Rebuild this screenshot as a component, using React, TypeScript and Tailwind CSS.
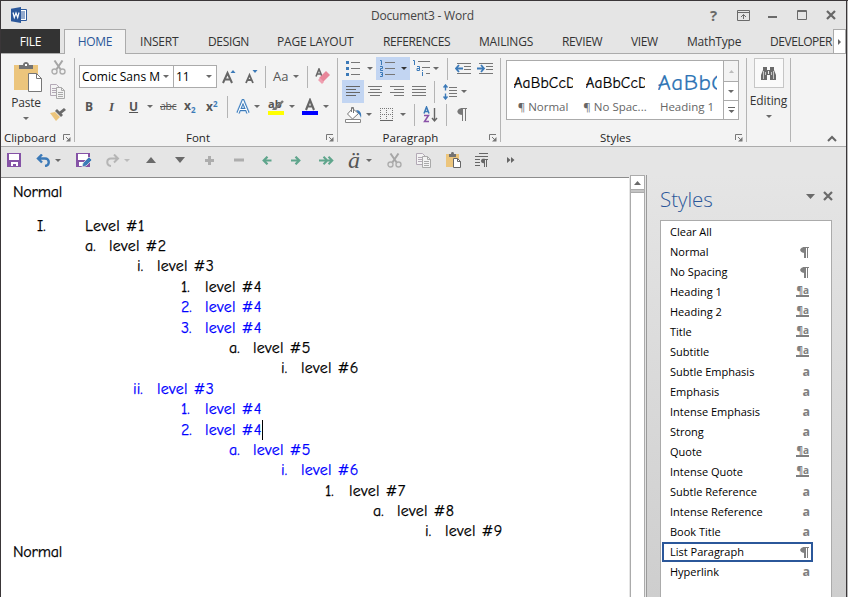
import type { ReactNode } from "react";

type IconProps = {
  w: number;
  h: number;
  className?: string;
  children: ReactNode;
};

function Icon({ w, h, className = "", children }: IconProps) {
  return (
    <svg
      width={w}
      height={h}
      viewBox={`0 0 ${w} ${h}`}
      fill="none"
      className={`shrink-0 ${className}`}
      aria-hidden="true"
    >
      {children}
    </svg>
  );
}

function Caret({ className = "", color = "#6a6a6a" }: { className?: string; color?: string }) {
  return (
    <Icon w={6} h={3} className={className}>
      <path d="M0 0h6L3 3z" fill={color} />
    </Icon>
  );
}

function Divider({ className = "" }: { className?: string }) {
  return <div className={`h-[22px] w-px shrink-0 bg-[#b4b4b4] ${className}`} />;
}

function Launcher() {
  return (
    <Icon w={8} h={8} className="absolute right-[4px] bottom-[4px]">
      <path d="M.5 6V.5H7M3 3l3 3" stroke="#777" />
      <path d="M7.5 3v4.5H3z" fill="#777" />
    </Icon>
  );
}

type GroupProps = {
  label?: string;
  className: string;
  launcher?: boolean;
  labelClass?: string;
  children: ReactNode;
};

function Group({ label, className, launcher, labelClass = "", children }: GroupProps) {
  return (
    <div className={`relative flex h-[92px] shrink-0 flex-col ${className}`}>
      <div className="h-[76px]">{children}</div>
      {label && (
        <div className={`text-center text-[11.5px] leading-[16px] text-[#262626] ${labelClass}`}>{label}</div>
      )}
      {launcher && <Launcher />}
      <div className="absolute top-[4px] right-0 h-[84px] w-px bg-[#b4b4b4]" />
    </div>
  );
}

function Scissors({ className = "" }: { className?: string }) {
  return (
    <Icon w={15} h={15} className={className}>
      <path d="M3.5 0.5L10 10M11.500 0.500L5 10" stroke="#a6a6a6" strokeWidth="2" />
      <circle cx="3.500" cy="11.500" r="2.500" stroke="#adadad" strokeWidth="1.400" />
      <circle cx="11.500" cy="11.500" r="2.500" stroke="#adadad" strokeWidth="1.400" />
    </Icon>
  );
}

function CopyIcon({ className = "" }: { className?: string }) {
  return (
    <Icon w={16} h={15} className={className}>
      <path d="M.5.5h6l3 3v8h-9z" fill="#f3f3f3" stroke="#b3a9b6" />
      <path d="M2 4.500h4M2 6.500h4M2 8.500h4" stroke="#b3a9b6" />
      <path d="M6.500 3.500h5l3 3v8h-8z" fill="#f3f3f3" stroke="#aaa" />
      <path d="M11.500 3.500v3h3M8 8.500h5M8 10.500h5M8 12.500h5" stroke="#aaa" />
    </Icon>
  );
}

const tabs = [
  { name: "INSERT", style: "w-[68px] tracking-[-0.2px]" },
  { name: "DESIGN", style: "w-[69px] tracking-[-0.35px]" },
  { name: "PAGE LAYOUT", style: "w-[106px] tracking-[-0.2px]" },
  { name: "REFERENCES", style: "w-[96px] tracking-[-0.35px]" },
  { name: "MAILINGS", style: "w-[83px] tracking-[-0.2px]" },
  { name: "REVIEW", style: "w-[69px] tracking-[-0.35px]" },
  { name: "VIEW", style: "w-[56px] tracking-[-0.35px]" },
  { name: "MathType", style: "w-[83px] tracking-[-0.2px]" },
  { name: "DEVELOPER", style: "w-[63px] tracking-[-0.45px]" },
];

function TitleBar() {
  return (
    <div className="flex h-[28px] items-center">
      <Icon w={17} h={16} className="ml-[10px]">
        <path d="M9 2.500h6.500v11H9z" fill="#fff" stroke="#2b579a" />
        <path d="M10 5h4M10 7h4M10 9h4M10 11h4" stroke="#2b579a" />
        <path d="M0 1.800L10 0v16L0 14.200z" fill="#2b579a" />
        <path d="M2 5.500l1.300 5L5 6l1.700 4.500L8 5.500" stroke="#fff" strokeWidth="1.200" />
      </Icon>
      <div className="ml-[343px] w-[110px] pt-[2px] text-[12px] tracking-[-0.2px] whitespace-nowrap text-[#444]">
        Document3 - Word
      </div>
      <div className="ml-[229px] w-[10px] text-[15px] font-bold text-[#6a6a6a]">?</div>
      <Icon w={13} h={11} className="ml-[17px]">
        <path d="M.5.5h12v10H.5zM0 2.500h13M6.500 9V4.500M4 7l2.500-2.500L9 7" stroke="#6a6a6a" />
      </Icon>
      <Icon w={10} h={10} className="ml-[18px]">
        <path d="M0 7h9" stroke="#6a6a6a" strokeWidth="2" />
      </Icon>
      <Icon w={10} h={10} className="ml-[19px]">
        <path d="M.5.5h9v9h-9zM0 1.500h10" stroke="#6a6a6a" />
      </Icon>
      <Icon w={10} h={10} className="ml-[19px]">
        <path d="M1 1l8 8M9 1L1 9" stroke="#666" strokeWidth="2.200" />
      </Icon>
    </div>
  );
}

function TabBar() {
  return (
    <div className="flex h-[25px] border-b border-[#ababab] text-[12px] leading-[25px] whitespace-nowrap text-[#333]">
      <div className="w-[59px] bg-[#333] text-center tracking-[-0.3px] text-white">FILE</div>
      <div className="ml-[4px] h-[25px] w-[62px] border-x border-t border-[#ababab] bg-[#f3f3f3] text-center leading-[24px] tracking-[-0.3px] text-[#2b579a]">
        HOME
      </div>
      <div className="ml-[14px] flex">
        {tabs.map((tab) => (
          <div key={tab.name} className={tab.style}>
            {tab.name}
          </div>
        ))}
      </div>
      <div className="flex h-[24px] w-[13px] items-center justify-center border border-b-0 border-[#ababab] bg-white">
        <Icon w={3} h={6}>
          <path d="M0 0v6l3-3z" fill="#666" />
        </Icon>
      </div>
    </div>
  );
}

function ClipboardGroup() {
  return (
    <Group label="Clipboard" className="w-[74px]" labelClass="pr-[16px]" launcher>
      <div className="flex">
        <div className="ml-[7px] flex w-[36px] flex-col items-center pt-[8px]">
          <Icon w={28} h={31} className="ml-[4px]">
            <path d="M0 3h24v25H0z" fill="#ecc57c" />
            <path d="M5 3h4c0-4 6-4 6 0h4v4H5z" fill="#737373" />
            <path d="M11 2h2v2h-2z" fill="#fff" />
            <path d="M14.500 11.500h8l5 5v13h-13z" fill="#fff" stroke="#777" />
            <path d="M22.500 11.500v5h5" stroke="#777" />
          </Icon>
          <div className="mt-[2px] text-[12px] leading-[16px] tracking-[-0.2px] text-[#333]">Paste</div>
          <Caret className="mt-[6px]" />
        </div>
        <div className="flex flex-col items-center pt-[6px] pl-[6px]">
          <Scissors />
          <CopyIcon className="mt-[9px]" />
          <Icon w={16} h={14} className="mt-[8px]">
            <path d="M0 6l5-1 5 5-4 4z" fill="#ecc57c" />
            <path d="M5 4l2-2 6 6-2 2z" fill="#6a6a6a" />
            <path d="M9 5l5-4 2 2-5 4z" fill="#6a6a6a" />
          </Icon>
        </div>
      </div>
    </Group>
  );
}

function FontGroup() {
  return (
    <Group label="Font" className="w-[263px]" labelClass="pr-[17px]" launcher>
      <div className="mt-[11px] flex h-[23px] items-center pl-[4px]">
        <div className="flex h-[23px] w-[95px] items-center justify-between border border-[#ababab] bg-white pr-[4px] pl-[2px] text-[12px] text-black">
          <span className="whitespace-nowrap">Comic Sans M</span>
          <Caret />
        </div>
        <div className="-ml-px flex h-[23px] w-[44px] items-center justify-between border border-[#ababab] bg-white pr-[4px] pl-[2px] text-[12px] text-black">
          11
          <Caret />
        </div>
        <Icon w={14} h={16} className="ml-[5px]">
          <path d="M1 14L5.500 4L10 14M2.500 10.500h6" stroke="#666" strokeWidth="2" />
          <path d="M8.500 4h5L11 1z" fill="#3c7ab8" />
        </Icon>
        <Icon w={13} h={16} className="ml-[9px]">
          <path d="M1 14L4.500 6L8 14M2 11h5" stroke="#666" strokeWidth="1.800" />
          <path d="M7.500 1h5L10 4z" fill="#3c7ab8" />
        </Icon>
        <Divider className="ml-[7px]" />
        <span className="ml-[7px] w-[17px] text-[13px] text-[#555]">Aa</span>
        <Caret className="ml-[3px]" />
        <Divider className="ml-[8px]" />
        <Icon w={16} h={17} className="ml-[7px]">
          <path d="M1 8.500L4 1L7 8.500M2 6h4" stroke="#666" strokeWidth="1.600" />
          <path d="M10 3l4 4-7 7-4-4z" fill="#e8879a" transform="translate(1 0)" />
          <path d="M4 10l4 4-2 2-4-4z" fill="#ef9fb0" transform="translate(1 0)" />
        </Icon>
      </div>
      <div className="mt-[7px] flex h-[23px] items-center pl-[10px] text-[12px] text-[#555]">
        <b className="w-[10px]">B</b>
        <i className="ml-[14px] w-[8px] font-['Liberation_Serif',serif] text-[13px] font-bold">I</i>
        <b className="ml-[12px] w-[10px] underline">U</b>
        <Caret className="ml-[8px]" />
        <span className="ml-[7px] w-[18px] text-[10.5px] tracking-[-0.3px] line-through">abc</span>
        <b className="ml-[6px] flex w-[14px] leading-[14px]">
          x<span className="pt-[7px] text-[8px] leading-[8px] text-[#3c7ab8]">2</span>
        </b>
        <b className="ml-[8px] flex w-[14px] leading-[14px]">
          x<span className="text-[8px] leading-[8px] text-[#3c7ab8]">2</span>
        </b>
        <Divider className="ml-[7px]" />
        <Icon w={15} h={16} className="ml-[8px]">
          <path d="M2 14L7 2L12 14M4 10.500h6" stroke="#9cc2e8" strokeWidth="4" />
          <path d="M2 14L7 2L12 14M4 10.500h6" stroke="#3c7ab8" strokeWidth="3" />
          <path d="M2 14L7 2L12 14M4 10.500h6" stroke="#fff" strokeWidth="1.200" />
        </Icon>
        <Caret className="ml-[3px]" />
        <div className="relative ml-[8px] h-[18px] w-[16px] text-[11px] leading-[12px] font-bold">
          ab
          <Icon w={16} h={18} className="absolute top-0 left-0">
            <path d="M15 3L7 11" stroke="#777" strokeWidth="2.400" />
            <path d="M4 12l2-3 3 3z" fill="#777" />
            <path d="M0 13h16v4H0z" fill="#ff0" />
          </Icon>
        </div>
        <Caret className="ml-[5px]" />
        <Icon w={16} h={18} className="ml-[7px]">
          <path d="M4 12L8 2L12 12M5.500 8.500h5" stroke="#666" strokeWidth="2.100" />
          <path d="M0 13h16v4H0z" fill="#00f" />
        </Icon>
        <Caret className="ml-[5px]" />
      </div>
    </Group>
  );
}

function ParagraphGroup() {
  return (
    <Group label="Paragraph" className="w-[163px]" labelClass="pr-[18px]" launcher>
      <div className="mt-[3px] flex h-[23px] items-center">
        <Icon w={14} h={16} className="ml-[8px]">
          <path d="M0 0h3v3H0zM0 6h3v3H0zM0 12h3v3H0z" fill="#3c7ab8" />
          <path d="M5 1.500h9M5 7.500h9M5 13.500h9" stroke="#777" />
        </Icon>
        <Caret className="ml-[7px]" />
        <div className="ml-[3px] flex h-[23px] w-[34px] items-center bg-[#c2d5f2]">
          <Icon w={15} h={17} className="ml-[4px]">
            <path d="M0 .5h1.500V5M0 6.500h2.500v2H.5v2H3M0 12.500h2.500v4H0M1 14.500h2" stroke="#3c7ab8" />
            <path d="M5 2.500h10M5 8.500h10M5 14.500h10" stroke="#777" />
          </Icon>
          <Caret className="ml-[6px]" color="#333" />
        </div>
        <Icon w={17} h={17} className="ml-[3px]">
          <path d="M0 .5h1.500V5M4 6.500h2.500v4H4v-2h2M9.500 12v4M9.500 10v1" stroke="#3c7ab8" />
          <path d="M5 1.500h12M9 7.500h8M13 13.500h4" stroke="#777" />
        </Icon>
        <Caret className="ml-[3px]" />
        <Divider className="ml-[8px]" />
        <Icon w={16} h={12} className="ml-[7px]">
          <path d="M2 .5h14M9 3.500h7M9 6.500h7M2 10.500h14" stroke="#777" />
          <path d="M8 5.500H1M4 2L1 5.500L4 9" stroke="#3c7ab8" strokeWidth="1.800" />
        </Icon>
        <Icon w={16} h={12} className="ml-[6px]">
          <path d="M2 .5h14M9 3.500h7M9 6.500h7M2 10.500h14" stroke="#777" />
          <path d="M0 5.500h7M4 2l3 3.500L4 9" stroke="#3c7ab8" strokeWidth="1.800" />
        </Icon>
      </div>
      <div className="flex h-[23px] items-center">
        <div className="ml-[4px] flex h-[23px] w-[22px] items-center justify-center bg-[#c2d5f2]">
          <Icon w={14} h={11}>
            <path d="M0 .5h14M0 3.500h10M0 6.500h14M0 9.500h10" stroke="#666" />
          </Icon>
        </div>
        <Icon w={14} h={11} className="ml-[4px]">
          <path d="M0 .5h14M2 3.500h10M0 6.500h14M2 9.500h10" stroke="#777" />
        </Icon>
        <Icon w={14} h={11} className="ml-[8px]">
          <path d="M0 .5h14M4 3.500h10M0 6.500h14M4 9.500h10" stroke="#777" />
        </Icon>
        <Icon w={14} h={11} className="ml-[8px]">
          <path d="M0 .5h14M0 3.500h14M0 6.500h14M0 9.500h14" stroke="#777" />
        </Icon>
        <Divider className="ml-[8px]" />
        <Icon w={14} h={16} className="ml-[8px]">
          <path d="M6 3.500h8M6 6.500h8M6 9.500h8M6 12.500h8" stroke="#777" />
          <path
            d="M2.500 1v5.500M.5 3.500L2.500 1l2 2.500M2.500 9.500V15M.5 12.500l2 2.500 2-2.500"
            stroke="#3c7ab8"
            strokeWidth="1.400"
          />
        </Icon>
        <Caret className="ml-[4px]" />
      </div>
      <div className="flex h-[23px] items-center">
        <Icon w={17} h={17} className="ml-[7px]">
          <path d="M7.500 2.500l6 5-6 5.500-5-5z" fill="#fff" stroke="#777" />
          <path d="M6.500 6V1.500h2V7" stroke="#777" />
          <path d="M11 4c4 0 6 3 5 8-1-3-2-4-3-5z" fill="#3c7ab8" />
          <path d="M.5 13.500h15v3H.5z" fill="#fff" stroke="#888" />
        </Icon>
        <Caret className="ml-[4px]" />
        <Icon w={13} h={13} className="ml-[8px]">
          <path d="M.5 0v12M6.500 0v12M12.500 0v12M0 .5h13M0 6.500h13" stroke="#777" strokeDasharray="1 1" />
          <path d="M0 12.500h13" stroke="#666" />
        </Icon>
        <Caret className="ml-[7px]" />
        <Divider className="ml-[8px]" />
        <Icon w={15} h={17} className="ml-[8px]">
          <path d="M1 7.500L3.500 1L6 7.500M1.800 5.500h3.400" stroke="#3c7ab8" strokeWidth="1.500" />
          <path d="M1 9.500h4.500L1.500 15.500H6" stroke="#8a52a8" strokeWidth="1.500" />
          <path d="M11.500 2v13M9 12l2.500 3L14 12" stroke="#666" strokeWidth="1.400" />
        </Icon>
        <Divider className="ml-[8px]" />
        <Icon w={11} h={13} className="ml-[10px]">
          <path d="M4 .5h6M5.500 1v12M8.500 1v12" stroke="#777" />
          <path d="M6 0v7C-1.500 7-1.500 0 6 0z" fill="#777" />
        </Icon>
      </div>
    </Group>
  );
}

const quickStyles = [
  { preview: "AaBbCcD", label: "¶ Normal", style: "text-[15.5px] text-black tracking-[0.1px]" },
  { preview: "AaBbCcD", label: "¶ No Spac...", style: "text-[15.5px] text-black tracking-[0.1px]" },
  { preview: "AaBbC", label: "Heading 1", style: "text-[23px] text-[#2e74b5] tracking-[0.5px]" },
];

function StylesGroup() {
  return (
    <Group label="Styles" className="w-[246px]" labelClass="pr-[17px]" launcher>
      <div className="mt-[6px] ml-[5px] flex h-[60px] w-[233px] border border-[#ababab] bg-white">
        {quickStyles.map((item) => (
          <div key={item.label} className="w-[72px] pt-[8px] text-center">
            <div
              className={`mx-auto h-[28px] w-[59px] overflow-hidden text-left leading-[28px] font-['Comic_Sans_MS','Comic_Neue','Noto_Sans',sans-serif] [-webkit-text-stroke:0.2px] ${item.style}`}
            >
              {item.preview}
            </div>
            <div className="text-[11.5px] leading-[20px] text-[#666]">{item.label}</div>
          </div>
        ))}
        <div className="ml-auto flex w-[15px] flex-col border-l border-[#ababab]">
          <div className="flex h-[20px] items-center justify-center bg-[#f3f3f3]">
            <Icon w={5} h={3}>
              <path d="M0 3h5L2.500 0z" fill="#bbb" />
            </Icon>
          </div>
          <div className="flex h-[19px] items-center justify-center border-t border-[#ababab]">
            <Caret />
          </div>
          <div className="flex h-[19px] items-center justify-center border-t border-[#ababab]">
            <Icon w={7} h={6}>
              <path d="M0 .5h7" stroke="#666" />
              <path d="M.5 3h6l-3 3z" fill="#666" />
            </Icon>
          </div>
        </div>
      </div>
    </Group>
  );
}

function EditingGroup() {
  return (
    <Group className="w-[44px]">
      <div className="flex flex-col items-center pt-[4px] pr-[1px]">
        <div className="flex h-[30px] w-[30px] items-center justify-center border border-[#c6c6c6] bg-[#fafafa]">
          <Icon w={15} h={13}>
            <path d="M2 0h4v3h3V0h4v3l2 5v5H9V8H6v5H0V8l2-5z" fill="#6a6a6a" />
            <path d="M2.500 4v8M12.500 4v8M4.500 5v3M10.500 5v3" stroke="#ddd" strokeWidth=".8" />
            <path d="M7 4h1v3H7z" fill="#eee" />
          </Icon>
        </div>
        <div className="mt-[5px] text-[12px] leading-[16px] tracking-[-0.1px] text-[#333]">Editing</div>
        <Caret className="mt-[6px]" />
      </div>
    </Group>
  );
}

function QuickAccess() {
  return (
    <div className="flex h-[26px] items-center">
      <Icon w={14} h={14} className="ml-[6px]">
        <path d="M0 0h14v14H0z" fill="#8553a6" />
        <path d="M2 1h10v6H2zM4 9h7v4H9v-2H6v2H4z" fill="#fff" />
      </Icon>
      <Icon w={15} h={13} className="ml-[15px]">
        <path d="M2 4.500h7c5 0 5 7 0 7.500M6 .5L2 4.500l4 4" stroke="#3c7ab8" strokeWidth="2.400" />
      </Icon>
      <Caret className="ml-[4px]" />
      <Icon w={16} h={15} className="ml-[15px]">
        <path d="M0 0h14v14H0z" fill="#8553a6" />
        <path d="M2 1h10v6H2zM3 9h5v4H3z" fill="#fff" />
        <path d="M6 14l1-4 6-6 3 3-6 6z" fill="#3c7ab8" stroke="#e5e5e5" strokeWidth=".8" />
      </Icon>
      <Icon w={15} h={13} className="ml-[13px]">
        <path d="M13 4.500H6c-5 0-5 7 0 7.500M9 .5l4 4-4 4" stroke="#b5b5b5" strokeWidth="2" />
      </Icon>
      <Caret className="ml-[4px]" color="#bbb" />
      <Icon w={10} h={6} className="ml-[16px]">
        <path d="M0 6h10L5 0z" fill="#6a6a6a" />
      </Icon>
      <Icon w={10} h={6} className="ml-[19px]">
        <path d="M0 0h10L5 6z" fill="#6a6a6a" />
      </Icon>
      <Icon w={9} h={9} className="ml-[20px]">
        <path d="M4.500 0v9M0 4.500h9" stroke="#adadad" strokeWidth="3" />
      </Icon>
      <Icon w={10} h={4} className="ml-[20px]">
        <path d="M0 2h10" stroke="#adadad" strokeWidth="3" />
      </Icon>
      <Icon w={10} h={9} className="ml-[18px]">
        <path d="M9.500 4.500H2M5.500 .7L1.700 4.500l3.800 3.800" stroke="#5fa58c" strokeWidth="2.200" />
      </Icon>
      <Icon w={10} h={9} className="ml-[19px]">
        <path d="M0 4.500h8M4.500 .7l3.800 3.800-3.800 3.800" stroke="#5fa58c" strokeWidth="2.200" />
      </Icon>
      <Icon w={15} h={9} className="ml-[18px]">
        <path d="M0 4.500h12M4.500 .7l3.800 3.800-3.800 3.800M9.500 .7l3.800 3.800-3.800 3.800" stroke="#5fa58c" strokeWidth="2" />
      </Icon>
      <i className="ml-[14px] w-[14px] font-['Liberation_Serif',serif] text-[24px] leading-[24px] text-[#555]">ä</i>
      <Caret className="ml-[4px]" />
      <Scissors className="ml-[15px]" />
      <CopyIcon className="ml-[14px]" />
      <Icon w={16} h={16} className="ml-[14px]">
        <path d="M0 2h13v13H0z" fill="#ecc57c" />
        <path d="M3 2h2c0-3 3-3 3 0h2v3H3z" fill="#737373" />
        <path d="M7.500 6.500h4l3 3v6h-7z" fill="#fff" stroke="#666" />
        <path d="M11.500 6.500v3h3" stroke="#666" />
      </Icon>
      <Icon w={14} h={14} className="ml-[13px]">
        <path d="M4 .5h9M0 3.500h13M0 6.500h5M0 9.500h5M0 12.500h5M9.500 6v8M11.500 6v8M8 6.500h5" stroke="#666" />
        <path d="M6 8c0-3 4-2 4-2v4s-4 1-4-2z" fill="#666" />
      </Icon>
      <Icon w={8} h={6} className="ml-[18px]">
        <path d="M0 0v6l3.500-3zM4 0v6l3.500-3z" fill="#666" />
      </Icon>
    </div>
  );
}

// x is where the number starts, indent is where the text starts
const outline = [
  { mark: "I.", x: 36, indent: 84, text: "Level #1" },
  { mark: "a.", x: 84, indent: 108, text: "level #2" },
  { mark: "i.", x: 136, indent: 156, text: "level #3" },
  { mark: "1.", x: 180, indent: 204, text: "level #4" },
  { mark: "2.", x: 180, indent: 204, text: "level #4", blue: true },
  { mark: "3.", x: 180, indent: 204, text: "level #4", blue: true },
  { mark: "a.", x: 228, indent: 252, text: "level #5" },
  { mark: "i.", x: 280, indent: 300, text: "level #6" },
  { mark: "ii.", x: 132, indent: 156, text: "level #3", blue: true },
  { mark: "1.", x: 180, indent: 204, text: "level #4", blue: true },
  { mark: "2.", x: 180, indent: 204, text: "level #4", blue: true, cursor: true },
  { mark: "a.", x: 228, indent: 252, text: "level #5", blue: true },
  { mark: "i.", x: 280, indent: 300, text: "level #6", blue: true },
  { mark: "1.", x: 324, indent: 348, text: "level #7" },
  { mark: "a.", x: 372, indent: 396, text: "level #8" },
  { mark: "i.", x: 424, indent: 444, text: "level #9" },
];

function DocumentView() {
  return (
    <div className="mt-[4px] mr-px w-[628px] border-t border-[#8c8c8c] bg-white pt-[3.6px] font-['Comic_Sans_MS','Comic_Neue','Noto_Sans',sans-serif] text-[16px] leading-[20.4px] text-black [-webkit-text-stroke:0.25px]">
      <div className="mb-[13.6px] ml-[12px] tracking-[-0.2px]">Normal</div>
      {outline.map((line, i) => (
        <div
          key={i}
          className={`flex h-[20.4px] ${line.blue ? "text-[#0000ff]" : ""}`}
          style={{ paddingLeft: line.x }}
        >
          <span style={{ width: line.indent - line.x }}>{line.mark}</span>
          <span className="tracking-[0.3px]">{line.text}</span>
          {line.cursor && <span className="h-[20px] w-px bg-black" />}
        </div>
      ))}
      <div className="ml-[12px] tracking-[-0.2px]">Normal</div>
    </div>
  );
}

function Scrollbar() {
  return (
    <div className="flex w-[15px] flex-col border-x border-[#ababab] bg-white">
      <div className="flex h-[15px] items-center justify-center border-y border-[#ababab]">
        <Icon w={7} h={4}>
          <path d="M0 4h7L3.500 0z" fill="#6a6a6a" />
        </Icon>
      </div>
      <div className="h-[3px] border-b border-[#ababab] bg-[#c4c4c4]" />
    </div>
  );
}

const paneStyles = [
  { name: "Clear All", kind: "" },
  { name: "Normal", kind: "para" },
  { name: "No Spacing", kind: "para" },
  { name: "Heading 1", kind: "linked" },
  { name: "Heading 2", kind: "linked" },
  { name: "Title", kind: "linked" },
  { name: "Subtitle", kind: "linked" },
  { name: "Subtle Emphasis", kind: "char" },
  { name: "Emphasis", kind: "char" },
  { name: "Intense Emphasis", kind: "char" },
  { name: "Strong", kind: "char" },
  { name: "Quote", kind: "linked" },
  { name: "Intense Quote", kind: "linked" },
  { name: "Subtle Reference", kind: "char" },
  { name: "Intense Reference", kind: "char" },
  { name: "Book Title", kind: "char" },
  { name: "List Paragraph", kind: "para" },
  { name: "Hyperlink", kind: "char" },
];

function StyleKind({ kind }: { kind: string }) {
  if (kind === "para") {
    return (
      <Icon w={9} h={11}>
        <path d="M3 .5h6M7.500 1v10" stroke="#808080" />
        <path d="M4 0h2v11H4z" fill="#808080" />
        <path d="M5 0v6C-1.500 6-1.500 0 5 0z" fill="#808080" />
      </Icon>
    );
  }
  if (kind === "char") return <span className="-mr-px text-[12.5px] leading-[16px] font-bold">a</span>;
  if (kind === "linked") {
    return (
      <span className="-mt-px h-[11px] border-b-2 border-[#808080] text-[10px] leading-[8px] font-bold">¶a</span>
    );
  }
  return null;
}

function StylesPane() {
  return (
    <div className="ml-px flex w-[200px] flex-col border-l border-[#9a9a9a] bg-linear-to-b from-[#e5e5e5] to-[#cecece]">
      <div className="flex h-[45px] items-center pt-[4px] pl-[13px]">
        <div className="w-[146px] text-[20.5px] font-light text-[#2b579a]">Styles</div>
        <Icon w={9} h={5} className="-mt-[6px]">
          <path d="M0 0h9L4.500 5z" fill="#6a6a6a" />
        </Icon>
        <Icon w={10} h={10} className="-mt-[7px] ml-[8px]">
          <path d="M1 1l8 8M9 1L1 9" stroke="#6a6a6a" strokeWidth="2.200" />
        </Icon>
      </div>
      <div className="ml-[13px] w-[172px] grow border border-b-0 border-[#ababab] bg-white pt-[1px] pl-[1px]">
        {paneStyles.map((item) => (
          <div
            key={item.name}
            className={`flex h-[20px] w-[151px] items-center justify-between border-2 pr-[2px] pl-[6px] text-[11px] whitespace-nowrap text-black ${
              item.name === "List Paragraph" ? "border-[#2b579a]" : "border-transparent"
            }`}
          >
            {item.name}
            <span className="flex text-[#808080]">
              <StyleKind kind={item.kind} />
            </span>
          </div>
        ))}
      </div>
    </div>
  );
}

export default function App() {
  return (
    <div className="flex h-[597px] w-[848px] overflow-hidden border-t border-l border-[#3a3638] bg-[#e5e5e5] font-['Segoe_UI','Open_Sans',sans-serif]">
      <div className="flex w-[845px] shrink-0 flex-col">
        <TitleBar />
        <TabBar />
        <div className="flex h-[93px] border-b border-[#ababab] bg-[#f3f3f3]">
          <ClipboardGroup />
          <FontGroup />
          <ParagraphGroup />
          <StylesGroup />
          <EditingGroup />
          <Icon w={10} h={7} className="mt-[81px] ml-[36px]">
            <path d="M1 6l4-4 4 4" stroke="#666" strokeWidth="2" />
          </Icon>
        </div>
        <QuickAccess />
        <div className="flex h-[424px] shrink-0">
          <DocumentView />
          <div className="mt-[2px] flex">
            <Scrollbar />
            <StylesPane />
          </div>
        </div>
      </div>
      <div className="w-px shrink-0 bg-[#3a3638]" />
      <div className="w-px shrink-0 bg-[#b8b8b8]" />
    </div>
  );
}
